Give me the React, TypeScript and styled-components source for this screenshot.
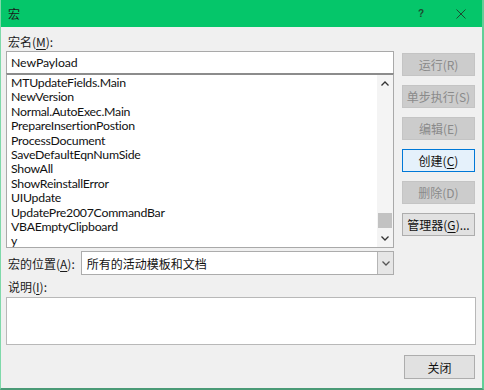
import React from "react";
import styled, { createGlobalStyle } from "styled-components";

const Global = createGlobalStyle`
  html, body { margin: 0; padding: 0; background: #f0f0f0; }
  body { font-family: "Lato", "Noto Sans CJK SC", sans-serif; }
`;

const Window = styled.div`
  width: 484px;
  height: 390px;
  box-sizing: border-box;
  background: #f0f0f0;
  border-left: 1px solid #7fd9aa;
  border-right: 2px solid #62cf98;
  border-bottom: 2px solid #4a9a76;
  display: flex;
  flex-direction: column;
  overflow: hidden;
`;

const TitleBar = styled.div`
  height: 27px;
  margin-left: -1px;
  margin-right: -2px;
  background: #05c66a;
  display: flex;
  align-items: center;
  padding: 0 8px 0 8px;
  font-family: "Noto Sans CJK SC", sans-serif;
  font-size: 12px;
  color: #1a1a1a;
`;

const Title = styled.span`
  flex: 1;
`;

const TitleButton = styled.span<{ $w: number; $mr?: number }>`
  width: ${(p) => p.$w}px;
  margin-right: ${(p) => p.$mr ?? 0}px;
  display: flex;
  justify-content: center;
  align-items: center;
  color: #1d4a30;
  font-family: "Liberation Sans", sans-serif;
  font-weight: bold;
  font-size: 10px;
`;

const Body = styled.div`
  flex: 1;
  display: grid;
  grid-template-columns: 388px 73px;
  grid-template-rows: auto 1fr;
  column-gap: 8px;
  padding: 5px 0 0 5px;
`;

const Left = styled.div`
  display: flex;
  flex-direction: column;
`;

const Right = styled.div`
  display: flex;
  flex-direction: column;
  padding-top: 21px;
  gap: 9px;
`;

const Label = styled.div<{ $h?: number }>`
  height: ${(p) => p.$h ?? 19}px;
  display: flex;
  align-items: center;
  padding-left: 2px;
  font-family: "Noto Sans CJK SC", sans-serif;
  font-size: 12px;
  color: #1a1a1a;
  white-space: nowrap;
`;

const U = styled.span`
  text-decoration: underline;
  text-underline-offset: 2px;
`;

const NameInput = styled.div`
  height: 22px;
  box-sizing: border-box;
  background: #fff;
  border: 1px solid #a9a9a9;
  border-bottom: none;
  display: flex;
  align-items: center;
  padding-left: 4px;
  font-size: 12.3px;
  letter-spacing: -0.1px;
  color: #111;
`;

const ListBox = styled.div`
  height: 175px;
  box-sizing: border-box;
  background: #fff;
  border: 1px solid #a9a9a9;
  border-top: 2px solid #8c8c8c;
  display: flex;
`;

const Items = styled.div`
  flex: 1;
  padding: 1px 0 0 4px;
  overflow: hidden;
`;

const Item = styled.div`
  height: 14.4px;
  line-height: 14.4px;
  font-size: 12.3px;
  letter-spacing: -0.25px;
  color: #111;
  white-space: nowrap;
`;

const ScrollBar = styled.div`
  width: 16px;
  display: flex;
  flex-direction: column;
  align-items: center;
  background: #f4f4f4;
`;

const Arrow = styled.div`
  height: 17px;
  width: 16px;
  display: flex;
  align-items: center;
  justify-content: center;
`;

const Track = styled.div`
  flex: 1;
  width: 16px;
  display: flex;
  flex-direction: column;
  justify-content: flex-end;
  padding-bottom: 2px;
  box-sizing: border-box;
`;

const Thumb = styled.div`
  height: 15px;
  margin: 0 1px;
  background: #c2c2c2;
`;

const Row = styled.div`
  display: flex;
  align-items: center;
  margin-top: 3px;
  height: 24px;
`;

const Combo = styled.div`
  flex: 1;
  height: 24px;
  box-sizing: border-box;
  margin-left: 6px;
  background: #fff;
  border: 1px solid #acacac;
  display: flex;
  align-items: stretch;
`;

const ComboText = styled.div`
  flex: 1;
  display: flex;
  align-items: center;
  padding-left: 5px;
  font-family: "Noto Sans CJK SC", sans-serif;
  font-size: 12px;
  color: #111;
`;

const ComboButton = styled.div`
  width: 15px;
  background: #e6e6e6;
  border-left: 1px solid #b5b5b5;
  display: flex;
  align-items: center;
  justify-content: center;
`;

const Memo = styled.div`
  width: 470px;
  height: 48px;
  box-sizing: border-box;
  background: #fff;
  border: 1px solid #b8b8b8;
`;

const Footer = styled.div`
  grid-column: 1 / span 2;
  display: flex;
  justify-content: flex-end;
  padding-top: 10px;
`;

const Button = styled.div<{ $state: "disabled" | "default" | "focus" }>`
  height: 23px;
  width: 73px;
  box-sizing: border-box;
  display: flex;
  align-items: center;
  justify-content: center;
  font-family: "Noto Sans CJK SC", sans-serif;
  font-size: 12px;
  white-space: nowrap;
  background: ${(p) =>
    p.$state === "disabled" ? "#cccccc" : p.$state === "focus" ? "#e5f1fb" : "#e1e1e1"};
  border: 1px solid
    ${(p) =>
      p.$state === "disabled" ? "#c4c4c4" : p.$state === "focus" ? "#0078d7" : "#adadad"};
  color: ${(p) => (p.$state === "disabled" ? "#8a8a8a" : "#111")};
`;

const CloseButton = styled(Button)`
  width: 71px;
  height: 24px;
`;

const Chevron = ({ up, color = "#333" }: { up?: boolean; color?: string }) => (
  <svg width="8" height="5" viewBox="0 0 8 5">
    <path
      d={up ? "M0.5 4.5 L4 1 L7.5 4.5" : "M0.5 0.5 L4 4 L7.5 0.5"}
      fill="none"
      stroke={color}
      strokeWidth="1.3"
    />
  </svg>
);

const macros = [
  "MTUpdateFields.Main",
  "NewVersion",
  "Normal.AutoExec.Main",
  "PrepareInsertionPostion",
  "ProcessDocument",
  "SaveDefaultEqnNumSide",
  "ShowAll",
  "ShowReinstallError",
  "UIUpdate",
  "UpdatePre2007CommandBar",
  "VBAEmptyClipboard",
  "y",
];

export default function App() {
  return (
    <>
      <Global />
      <Window>
        <TitleBar>
          <Title>宏</Title>
          <TitleButton $w={20} $mr={15}>?</TitleButton>
          <TitleButton $w={30}>
            <svg width="10" height="10" viewBox="0 0 10 10">
              <path d="M0.5 0.5 L9.5 9.5 M9.5 0.5 L0.5 9.5" stroke="#1d4a30" strokeWidth="1" />
            </svg>
          </TitleButton>
        </TitleBar>
        <Body>
          <Left>
            <Label>
              宏名(<U>M</U>):
            </Label>
            <NameInput>NewPayload</NameInput>
            <ListBox>
              <Items>
                {macros.map((m) => (
                  <Item key={m}>{m}</Item>
                ))}
              </Items>
              <ScrollBar>
                <Arrow>
                  <Chevron up />
                </Arrow>
                <Track>
                  <Thumb />
                </Track>
                <Arrow>
                  <Chevron />
                </Arrow>
              </ScrollBar>
            </ListBox>
            <Row>
              <Label $h={24}>
                宏的位置(<U>A</U>):
              </Label>
              <Combo>
                <ComboText>所有的活动模板和文档</ComboText>
                <ComboButton>
                  <Chevron color="#555" />
                </ComboButton>
              </Combo>
            </Row>
            <Label $h={22}>
              说明(<U>I</U>):
            </Label>
            <Memo />
          </Left>
          <Right>
            <Button $state="disabled">运行(R)</Button>
            <Button $state="disabled">单步执行(S)</Button>
            <Button $state="disabled">编辑(E)</Button>
            <Button $state="focus">
              创建(<U>C</U>)
            </Button>
            <Button $state="disabled">删除(D)</Button>
            <Button $state="default">
              管理器(<U>G</U>)...
            </Button>
          </Right>
          <Footer>
            <CloseButton $state="default">关闭</CloseButton>
          </Footer>
        </Body>
      </Window>
    </>
  );
}
